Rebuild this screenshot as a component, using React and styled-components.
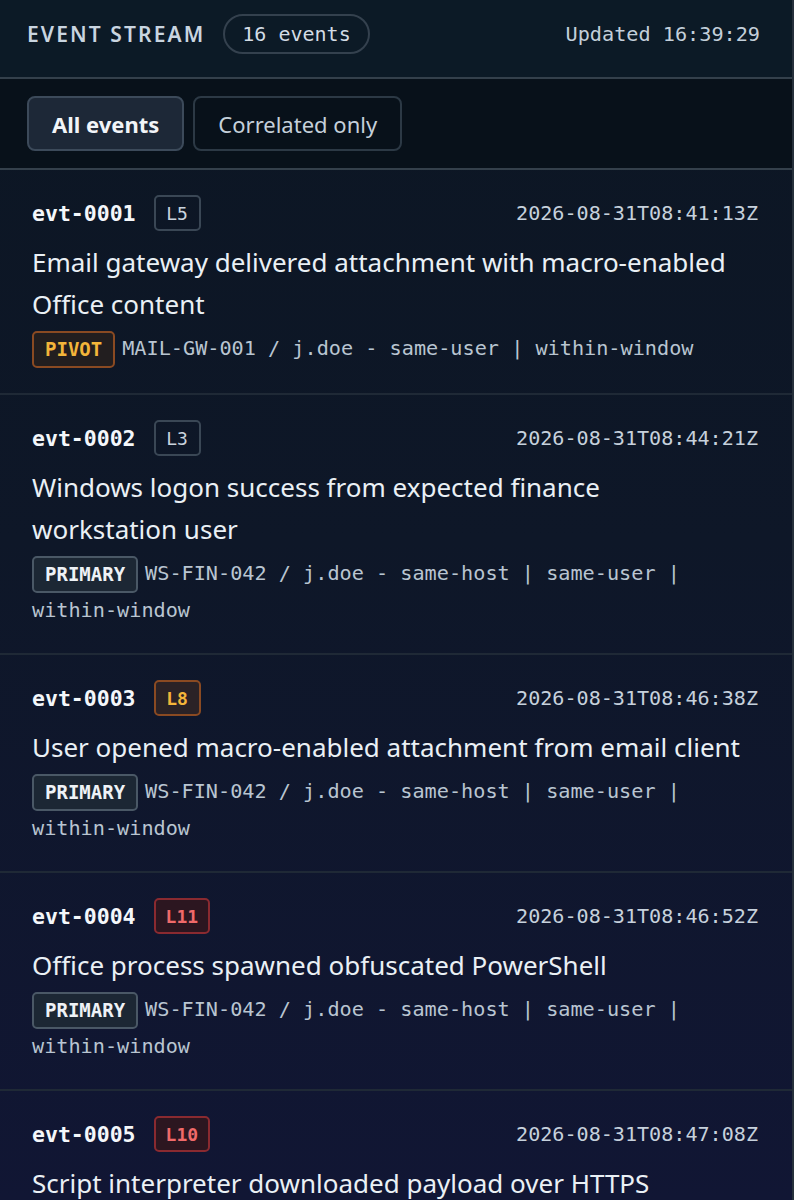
import React from 'react';
import styled, { createGlobalStyle } from 'styled-components';

const GlobalStyle = createGlobalStyle`
  html, body {
    margin: 0;
    padding: 0;
    background: #0b1420;
  }
  * { box-sizing: border-box; }
`;

const sans = `"Segoe UI", "Noto Sans", "Open Sans", sans-serif`;
const mono = `"DejaVu Sans Mono", "Liberation Mono", monospace`;

const events = [
  {
    id: 'evt-0001', level: 'L5', sev: 'low', ts: '2026-08-31T08:41:13Z',
    title: 'Email gateway delivered attachment with macro-enabled Office content',
    tag: 'PIVOT', meta: 'MAIL-GW-001 / j.doe - same-user | within-window',
  },
  {
    id: 'evt-0002', level: 'L3', sev: 'low', ts: '2026-08-31T08:44:21Z',
    title: 'Windows logon success from expected finance workstation user',
    tag: 'PRIMARY', meta: 'WS-FIN-042 / j.doe - same-host | same-user | within-window',
  },
  {
    id: 'evt-0003', level: 'L8', sev: 'mid', ts: '2026-08-31T08:46:38Z',
    title: 'User opened macro-enabled attachment from email client',
    tag: 'PRIMARY', meta: 'WS-FIN-042 / j.doe - same-host | same-user | within-window',
  },
  {
    id: 'evt-0004', level: 'L11', sev: 'high', ts: '2026-08-31T08:46:52Z',
    title: 'Office process spawned obfuscated PowerShell',
    tag: 'PRIMARY', meta: 'WS-FIN-042 / j.doe - same-host | same-user | within-window',
  },
  {
    id: 'evt-0005', level: 'L10', sev: 'high', ts: '2026-08-31T08:47:08Z',
    title: 'Script interpreter downloaded payload over HTTPS',
    tag: 'PRIMARY', meta: 'WS-FIN-042 / j.doe - same-host | same-user | within-window',
  },
];

const sevColors = {
  low: { fg: '#c9d3de', bg: 'transparent', border: '#3a4755' },
  mid: { fg: '#f3b53a', bg: '#2a2226', border: '#8a4a22' },
  high: { fg: '#f06a6a', bg: '#2c1620', border: '#8a2a30' },
};

const tagColors = {
  PIVOT: { fg: '#f3b53a', bg: '#221e1f', border: '#8a4a22' },
  PRIMARY: { fg: '#eef2f6', bg: '#1c2734', border: '#4a5866' },
};

const Panel = styled.div`
  width: 794px;
  height: 1200px;
  border-right: 2px solid #26303b;
  background: linear-gradient(180deg, #0c1623 0%, #0e1728 45%, #111634 100%);
  overflow: hidden;
`;

const Header = styled.header`
  height: 79px;
  display: flex;
  align-items: center;
  justify-content: space-between;
  padding: 0 32px 10px 27px;
  background: #0c1a26;
  border-bottom: 2px solid #34404b;
`;

const HeaderLeft = styled.div`
  display: flex;
  align-items: center;
  gap: 18px;
`;

const Heading = styled.h1`
  margin: 0;
  font-family: ${sans};
  font-size: 21px;
  font-weight: 600;
  letter-spacing: 2.1px;
  color: #c9d5e0;
`;

const CountPill = styled.span`
  display: inline-flex;
  align-items: center;
  height: 40px;
  padding: 0 17px;
  border: 2px solid #34414e;
  border-radius: 20px;
  font-family: ${mono};
  font-size: 20px;
  color: #d3dce5;
`;

const Updated = styled.span`
  font-family: ${mono};
  font-size: 20.2px;
  color: #c3cfda;
`;

const Toolbar = styled.div`
  height: 91px;
  display: flex;
  align-items: center;
  gap: 9px;
  padding: 0 27px;
  background: #08111a;
  border-bottom: 2px solid #34404b;
`;

const FilterButton = styled.button`
  height: 55px;
  padding: 0 23px;
  border-radius: 8px;
  border: 2px solid ${(p) => (p.$active ? '#3c4a5a' : '#2c3945')};
  background: ${(p) => (p.$active ? '#1d2837' : 'transparent')};
  color: ${(p) => (p.$active ? '#f2f5f8' : '#c5d0da')};
  font-family: ${sans};
  font-size: 22px;
  font-weight: ${(p) => (p.$active ? 700 : 400)};
  cursor: pointer;
`;

const List = styled.div`
  display: flex;
  flex-direction: column;
`;

const Card = styled.article`
  padding: 25px 34px 25px 32px;
  border-bottom: 2px solid #1f2936;
`;

const TopRow = styled.div`
  display: flex;
  align-items: center;
  gap: 18px;
`;

const EventId = styled.span`
  font-family: ${mono};
  font-size: 21.5px;
  font-weight: 700;
  color: #f4f7fa;
`;

const Level = styled.span`
  display: inline-flex;
  align-items: center;
  justify-content: center;
  height: 36px;
  min-width: 47px;
  padding: 0 10px;
  border-radius: 5px;
  border: 2px solid ${(p) => sevColors[p.$sev].border};
  background: ${(p) => sevColors[p.$sev].bg};
  color: ${(p) => sevColors[p.$sev].fg};
  font-family: ${mono};
  font-size: 18px;
  font-weight: ${(p) => (p.$sev === 'low' ? 400 : 700)};
`;

const Timestamp = styled.span`
  margin-left: auto;
  font-family: ${mono};
  font-size: 20.1px;
  color: #c6d1dc;
`;

const Title = styled.h2`
  margin: 10px 0 6px;
  padding-right: 12px;
  font-family: ${sans};
  font-size: 26px;
  font-weight: 400;
  line-height: 42px;
  color: #eaf0f5;
`;

const Meta = styled.div`
  font-family: ${mono};
  font-size: 20.2px;
  line-height: 35px;
  color: #b9c5d1;
`;

const Tag = styled.span`
  display: inline-block;
  height: 37px;
  line-height: 33px;
  padding: 0 11px;
  margin-right: 7px;
  border-radius: 5px;
  border: 2px solid ${(p) => tagColors[p.$kind].border};
  background: ${(p) => tagColors[p.$kind].bg};
  color: ${(p) => tagColors[p.$kind].fg};
  font-size: 19px;
  font-weight: 700;
  vertical-align: middle;
`;

function EventCard({ ev }) {
  return (
    <Card>
      <TopRow>
        <EventId>{ev.id}</EventId>
        <Level $sev={ev.sev}>{ev.level}</Level>
        <Timestamp>{ev.ts}</Timestamp>
      </TopRow>
      <Title>{ev.title}</Title>
      <Meta>
        <Tag $kind={ev.tag}>{ev.tag}</Tag>
        {ev.meta}
      </Meta>
    </Card>
  );
}

export default function App() {
  return (
    <>
      <GlobalStyle />
      <Panel>
        <Header>
          <HeaderLeft>
            <Heading>EVENT STREAM</Heading>
            <CountPill>16 events</CountPill>
          </HeaderLeft>
          <Updated>Updated 16:39:29</Updated>
        </Header>
        <Toolbar>
          <FilterButton $active>All events</FilterButton>
          <FilterButton>Correlated only</FilterButton>
        </Toolbar>
        <List>
          {events.map((ev) => (
            <EventCard key={ev.id} ev={ev} />
          ))}
        </List>
      </Panel>
    </>
  );
}
